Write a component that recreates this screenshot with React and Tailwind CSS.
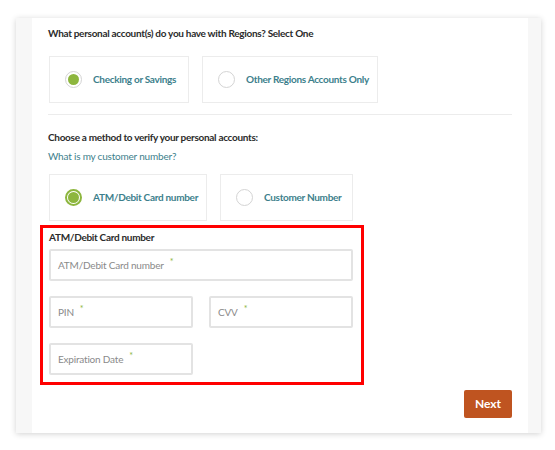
import React from "react";

const font = { fontFamily: "Lato, 'Open Sans', sans-serif" };

const Radio = ({ checked, ring }) => {
    if (!checked) {
        return <span className="w-[17px] h-[17px] rounded-full border border-[#d4d4d4] bg-white shrink-0" />;
    }
    return (
        <span
            className={
                ring
                    ? "w-[17px] h-[17px] rounded-full border-2 border-[#8db63e] bg-white flex items-center justify-center shrink-0"
                    : "w-[17px] h-[17px] rounded-full border border-[#d4d4d4] bg-white flex items-center justify-center shrink-0"
            }
        >
            <span className="w-[11px] h-[11px] rounded-full bg-[#8db63e]" />
        </span>
    );
};

const Choice = ({ label, checked, ring, width }) => (
    <div className={`${width} h-[47px] border border-[#ececec] flex items-center pl-[15px] gap-[11px]`}>
        <Radio checked={checked} ring={ring} />
        <span className="text-[10px] font-bold text-[#3d7f8c] whitespace-nowrap tracking-[-0.3px]">{label}</span>
    </div>
);

const Field = ({ label, width }) => (
    <div className={`${width} h-[32px] border-2 border-[#e3e3e3] rounded-[2px] flex items-center pl-[7px]`}>
        <span className="text-[10px] text-[#8a8a8a] tracking-[-0.2px]">{label}</span>
        <span className="text-[9px] text-[#8db63e] ml-[6px] -mt-[6px]">*</span>
    </div>
);

export default function App() {
    return (
        <div className="w-[555px] h-[450px] bg-white pt-[18px] pl-[16px]" style={font}>
            <div className="w-[525px] h-[415px] flex bg-white shadow-[0_1px_6px_rgba(0,0,0,0.18)]">
                <div className="w-[16px] bg-[#f7f7f7]" />
                <div className="flex-1 px-[16px] pt-[8px]">
                    <p className="text-[10px] font-bold text-[#2b2b2b] leading-[14px] tracking-[-0.3px]">
                        What personal account(s) do you have with Regions? Select One
                    </p>
                    <div className="flex gap-[13px] mt-[16px] pl-[1px]">
                        <Choice label="Checking or Savings" checked width="w-[140px]" />
                        <Choice label="Other Regions Accounts Only" width="w-[176px]" />
                    </div>
                    <div className="h-px bg-[#ececec] mt-[11px]" />

                    <p className="text-[10px] font-bold text-[#2b2b2b] leading-[14px] mt-[15px] tracking-[-0.3px]">
                        Choose a method to verify your personal accounts:
                    </p>
                    <p className="text-[10px] text-[#3d7f8c] leading-[14px] mt-[5px] tracking-[-0.2px]">
                        What is my customer number?
                    </p>
                    <div className="flex gap-[13px] mt-[11px] pl-[1px]">
                        <Choice label="ATM/Debit Card number" checked ring width="w-[158px]" />
                        <Choice label="Customer Number" width="w-[133px]" />
                    </div>

                    <div className="ml-[-8px] mt-[4px] w-[324px] h-[160px] border-[3px] border-[#ff0000] pl-[6px] pt-[2px]">
                        <p className="text-[10px] font-bold text-[#2b2b2b] leading-[14px] tracking-[-0.3px]">ATM/Debit Card number</p>
                        <div className="mt-[5px] flex flex-col gap-[15px]">
                            <Field label="ATM/Debit Card number" width="w-[304px]" />
                            <div className="flex gap-[16px]">
                                <Field label="PIN" width="w-[144px]" />
                                <Field label="CVV" width="w-[144px]" />
                            </div>
                            <Field label="Expiration Date" width="w-[144px]" />
                        </div>
                    </div>

                    <div className="flex justify-end mt-[5px]">
                        <button className="w-[48px] h-[28px] bg-[#bf5420] text-white text-[12px] font-bold rounded-[2px]">
                            Next
                        </button>
                    </div>
                </div>
                <div className="w-[13px] bg-[#f7f7f7]" />
            </div>
        </div>
    );
}
